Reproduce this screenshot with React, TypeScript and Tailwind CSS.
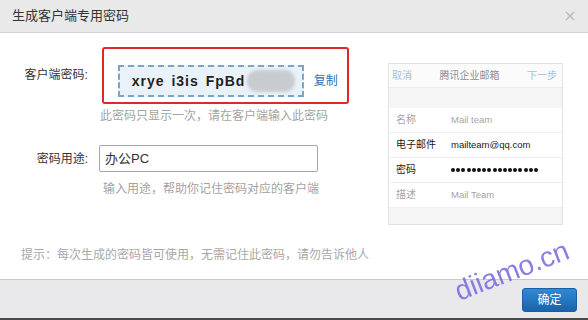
import React from "react";

const FONT = {
  fontFamily: '"Liberation Sans", "Noto Sans CJK SC", sans-serif',
};

interface PhoneRowProps {
  label: string;
  value?: string;
  dark?: boolean;
  dots?: number;
}

function PhoneRow({ label, value, dark, dots }: PhoneRowProps) {
  const color = dark ? "text-[#1a1a1a]" : "text-[#a5a5a5]";
  return (
    <div className="h-[25px] shrink-0 flex items-center bg-white border-b border-[#eeeeee] pl-[7px]">
      <div className={`w-[55px] text-[10px] leading-[12px] ${color}`}>{label}</div>
      {dots ? (
        <div className="flex items-center gap-[1.2px]">
          {Array.from({ length: dots }).map((_, i) => (
            <div key={i} className="w-[4px] h-[4px] rounded-full bg-[#111]" />
          ))}
        </div>
      ) : (
        <div className={`text-[9.5px] leading-[12px] ${color}`}>{value}</div>
      )}
    </div>
  );
}

export default function App() {
  return (
    <div
      className="w-[588px] h-[320px] bg-white flex flex-col relative overflow-hidden"
      style={FONT}
    >
      {/* Header */}
      <div className="h-[33px] shrink-0 bg-[#e9e9e9] border-b border-[#d2d2d2] flex items-center justify-between pl-[12px] pr-[12px]">
        <span className="text-[13px] leading-[16px] text-[#333]">生成客户端专用密码</span>
        <svg width="10" height="10" viewBox="0 0 10 10" className="mr-[1px]">
          <path d="M1 1 L9 9 M9 1 L1 9" stroke="#b8b8b8" strokeWidth="1.3" />
        </svg>
      </div>

      {/* Body */}
      <div className="flex-1 flex flex-col">
        <div className="flex">
          {/* Form */}
          <div className="w-[349px] shrink-0 flex flex-col">
            <div className="mt-[14px] flex items-start">
              <div className="w-[88px] text-right pt-[20px] text-[12px] leading-[16px] text-[#333]">
                客户端密码:
              </div>
              <div className="ml-[14px] w-[248px] h-[57px] border-2 border-[#e0282a] rounded-[3px] pt-[16px] pl-[14px] flex items-start">
                <div className="flex items-center">
                  <div className="w-[186px] h-[32px] border-2 border-dashed border-[#79a6c0] bg-[#e9f2f8] flex items-center pl-[12px]">
                    <span className="text-[14px] leading-[16px] font-bold tracking-[1px] [word-spacing:2px] text-[#222]">
                      xrye i3is FpBd
                    </span>
                    <div className="ml-[2px] w-[48px] h-[22px] rounded-[10px] bg-[#c8ccd0] blur-[1.5px]" />
                  </div>
                  <span className="ml-[10px] text-[12px] leading-[16px] text-[#2f6fb3]">复制</span>
                </div>
              </div>
            </div>
            <div className="mt-[4px] pl-[100px] text-[12px] leading-[16px] text-[#a3a3a3]">
              此密码只显示一次，请在客户端输入此密码
            </div>

            <div className="mt-[21px] flex items-center">
              <div className="w-[88px] text-right text-[12px] leading-[16px] text-[#333]">
                密码用途:
              </div>
              <div className="ml-[11px] w-[219px] h-[27px] border border-[#a6a6a6] rounded-[2px] flex items-center pl-[5px] text-[13px] leading-[16px] text-[#333]">
                办公PC
              </div>
            </div>
            <div className="mt-[9px] pl-[103px] text-[12px] leading-[16px] text-[#a3a3a3]">
              输入用途，帮助你记住密码对应的客户端
            </div>
          </div>

          {/* Phone preview */}
          <div className="ml-[39px] mt-[30px] w-[175px] h-[162px] border border-[#e2e2e2] flex flex-col bg-[#f5f5f5]">
            <div className="h-[24px] shrink-0 bg-[#fbfbfb] border-b border-[#eeeeee] flex items-center justify-between pl-[3px] pr-[5px] text-[10px] leading-[12px]">
              <span className="text-[#9fc2e2]">取消</span>
              <span className="text-[#8f8f8f]">腾讯企业邮箱</span>
              <span className="text-[#9fc2e2]">下一步</span>
            </div>
            <div className="h-[20px] shrink-0" />
            <PhoneRow label="名称" value="Mail team" />
            <PhoneRow label="电子邮件" value="mailteam@qq.com" dark />
            <PhoneRow label="密码" dark dots={17} />
            <PhoneRow label="描述" value="Mail Team" />
          </div>
        </div>

        <div className="mt-[22px] pl-[21px] text-[12px] leading-[16px] text-[#a8a8a8]">
          提示：每次生成的密码皆可使用，无需记住此密码，请勿告诉他人
        </div>
      </div>

      {/* Footer */}
      <div className="h-[41px] shrink-0 bg-[#e9e9eb] border-t border-[#cacaca] border-b-2 border-b-[#4a4a4a] flex items-start justify-end pt-[8px] pr-[11px]">
        <button className="w-[55px] h-[24px] rounded-[3px] border border-[#175ea3] bg-gradient-to-b from-[#2f8ad6] to-[#1a63a9] text-white text-[12px] leading-[14px] flex items-center justify-center">
          确定
        </button>
      </div>

      {/* Watermark */}
      <div className="absolute left-[452px] top-[256px] -rotate-[21deg] text-[28px] leading-[30px] text-[#7468e0] opacity-85 pointer-events-none">
        diiamo.cn
      </div>
    </div>
  );
}
